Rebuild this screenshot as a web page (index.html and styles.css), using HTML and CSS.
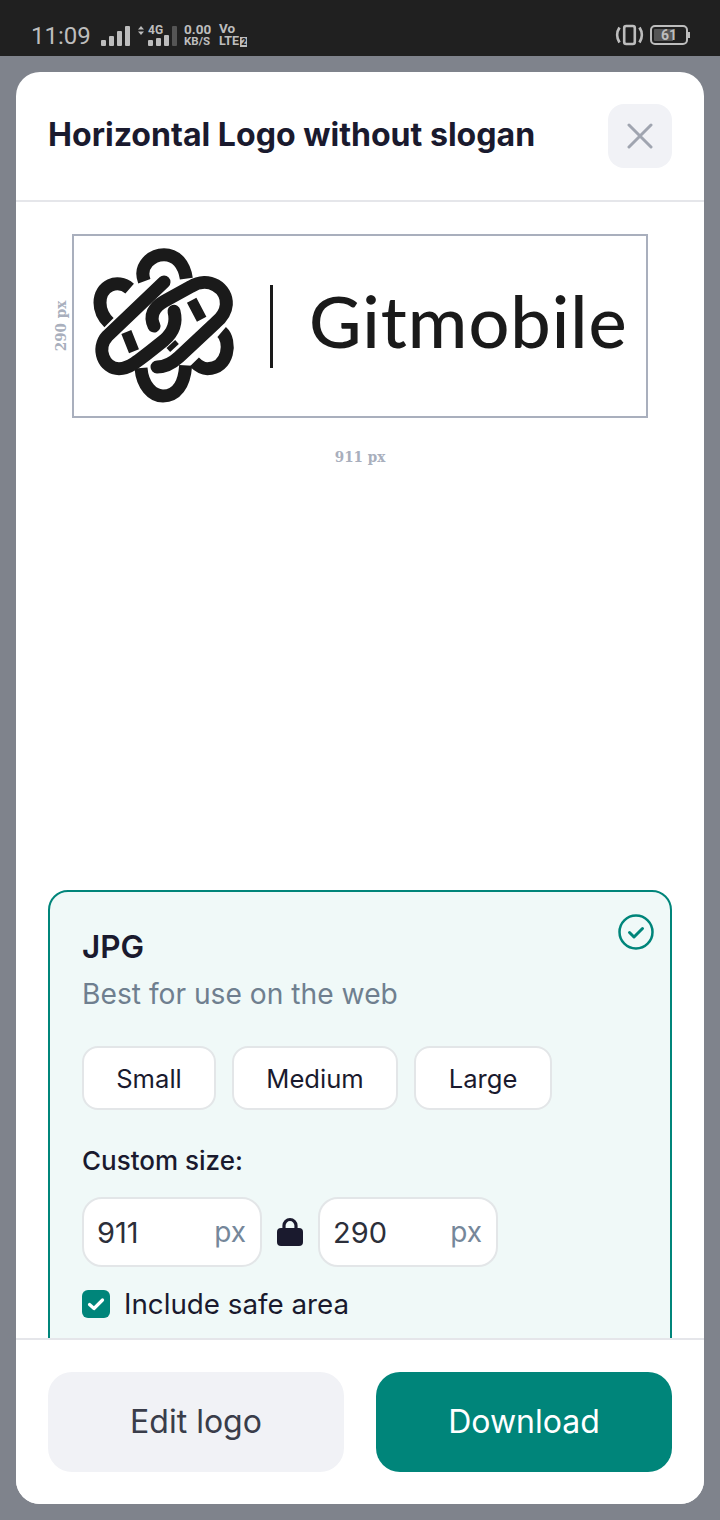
FILE: index.html
```html
<!DOCTYPE html>
<html lang="en">
<head>
  <meta charset="UTF-8" />
  <meta name="viewport" content="width=device-width, initial-scale=1.0"/>
  <title>Horizontal Logo without slogan</title>
  <link rel="stylesheet" href="styles.css">
</head>
<body>
  <div class="status-bar">
    <div class="status-left">
      <span class="time">11:09</span>
      <svg class="signal-a" width="29" height="20" viewBox="0 0 29 20">
        <rect x="0" y="14" width="5" height="6" rx="1"/>
        <rect x="8" y="10" width="5" height="10" rx="1"/>
        <rect x="16" y="5" width="5" height="15" rx="1"/>
        <rect x="24" y="0" width="5" height="20" rx="1"/>
      </svg>
      <svg class="arrows" width="6" height="9" viewBox="0 0 6 9">
        <path d="M3 0l3 3.5H0zM3 9L0 5.5h6z"/>
      </svg>
      <div class="net">
        <span class="net-label">4G</span>
        <svg width="29" height="11" viewBox="0 0 29 11">
          <rect x="0" y="5" width="5" height="6" rx="1"/>
          <rect x="8" y="3" width="5" height="8" rx="1"/>
          <rect x="16" y="0" width="5" height="11" rx="1"/>
        </svg>
        <svg class="signal-off" width="5" height="20" viewBox="0 0 5 20">
          <rect width="5" height="20" rx="1"/>
        </svg>
      </div>
      <div class="speed"><span>0.00</span><span>KB/S</span></div>
      <div class="volte"><span>Vo</span><span>LTE<b>2</b></span></div>
    </div>
    <div class="status-right">
      <svg width="29" height="22" viewBox="0 0 29 22" fill="none" stroke="#bdbdbd">
        <rect x="9.2" y="2" width="10.6" height="18" rx="2" stroke-width="2.6"/>
        <path d="M4.5 3.5C1.5 8 1.5 14 4.5 18.500M24.500 3.500C27.500 8 27.500 14 24.500 18.500" stroke-width="2.800"/>
      </svg>
      <div class="battery">
        <div class="battery-body"><span>61</span></div>
        <div class="battery-tip"></div>
      </div>
    </div>
  </div>

  <div class="backdrop">
    <div class="modal">
      <header class="modal-head">
        <h1>Horizontal Logo without slogan</h1>
        <button class="close-btn">
          <svg width="26" height="26" viewBox="0 0 26 26" fill="none" stroke="#a0a5b0" stroke-width="3" stroke-linecap="round">
            <path d="M2 2l22 22M24 2L2 24"/>
          </svg>
        </button>
      </header>

      <div class="modal-body">
        <div class="preview">
          <div class="logo-frame">
            <span class="dim dim-h">290 px</span>
            <svg class="logo-mark" width="150" height="160" viewBox="153 62 450 480" fill="none" stroke="#1a1a1a" stroke-width="39">
              <path d="M316 168C298 120 340 88 375 88C412 88 436 118 442 160"/>
              <path d="M272 190C235 158 183 182 183 232C183 256 194 276 210 292"/>
              <path d="M306 428C310 480 340 512 372 512C410 512 436 480 440 420"/>
              <path d="M548 320C578 346 570 430 505 430C490 430 478 422 466 410"/>
              <path stroke-linecap="round" d="M375 170L205 332C170 370 195 430 240 430C272 430 300 405 375 345C410 315 412 285 405 258"/>
              <path stroke-linecap="round" d="M345 302C330 270 345 245 375 228L455 184C510 150 565 190 562 238C560 262 545 280 530 292L420 395C395 418 375 425 354 425"/>
              <path stroke-width="32" d="M262 320L285 378M458 225L488 282"/>
              <path stroke-width="16" d="M388 374L414 350"/>
            </svg>
            <div class="logo-divider"></div>
            <span class="logo-name">Gitmobile</span>
          </div>
          <span class="dim dim-w">911 px</span>
        </div>

        <div class="format-card">
          <svg class="card-check" width="36" height="36" viewBox="0 0 36 36" fill="none" stroke="#00857a">
            <circle cx="18" cy="18" r="16.500" stroke-width="2.500"/>
            <path d="M11.500 18.500l4.500 4.500 8.500-8.500" stroke-width="3" stroke-linecap="round" stroke-linejoin="round"/>
          </svg>
          <h2>JPG</h2>
          <p class="format-desc">Best for use on the web</p>
          <div class="sizes">
            <button class="size-btn">Small</button>
            <button class="size-btn">Medium</button>
            <button class="size-btn">Large</button>
          </div>
          <div class="custom-label">Custom size:</div>
          <div class="custom-row">
            <div class="px-input"><span>911</span><span class="unit">px</span></div>
            <svg width="26" height="30" viewBox="0 0 26 30">
              <path d="M7 14V8.500a6 6 0 0 1 12 0V14" fill="none" stroke="#1a1a2e" stroke-width="3.200"/>
              <rect x="0" y="11" width="26" height="18" rx="4" fill="#1a1a2e"/>
            </svg>
            <div class="px-input"><span>290</span><span class="unit">px</span></div>
          </div>
          <label class="safe-area">
            <span class="checkbox">
              <svg width="18" height="14" viewBox="0 0 18 14" fill="none" stroke="#fff" stroke-width="3.200" stroke-linecap="round" stroke-linejoin="round">
                <path d="M2.500 7.500l4.500 4L15.500 3"/>
              </svg>
            </span>
            Include safe area
          </label>
        </div>
      </div>

      <footer class="modal-foot">
        <button class="foot-btn edit-btn">Edit logo</button>
        <button class="foot-btn download-btn">Download</button>
      </footer>
    </div>
  </div>
</body>
</html>
```

FILE: styles.css
```css
* {
  box-sizing: border-box;
}

body {
  margin: 0;
  width: 720px;
  height: 1520px;
  overflow: hidden;
  font-family: Inter, sans-serif;
  background: #7f838c;
  display: flex;
  flex-direction: column;
}

button {
  font-family: inherit;
  cursor: pointer;
}

/* status bar */
.status-bar {
  height: 56px;
  flex-shrink: 0;
  background: #202020;
  color: #bdbdbd;
  font-family: Roboto, sans-serif;
  display: flex;
  justify-content: space-between;
  align-items: flex-end;
  padding: 0 30px 10px 31px;
}

.status-left {
  display: flex;
  align-items: flex-end;
}

.status-left svg {
  fill: #bdbdbd;
  display: block;
}

.time {
  font-size: 24px;
  line-height: 24px;
  width: 70px;
  margin-bottom: -2px;
}

.arrows {
  margin: 0 4px 11px 8px;
}

.net {
  display: flex;
  align-items: flex-end;
  gap: 3px;
  position: relative;
  width: 29px;
}

.net-label {
  position: absolute;
  left: 0;
  bottom: 10px;
  font-size: 12px;
  line-height: 11px;
  font-weight: 700;
}

.status-left .signal-off {
  fill: #555;
  position: absolute;
  right: 0;
  bottom: 0;
}

.speed,
.volte {
  display: flex;
  flex-direction: column;
  font-weight: 700;
  font-size: 11.5px;
  line-height: 11px;
  margin-bottom: -1px;
}

.speed {
  margin-left: 7px;
  width: 35px;
}

.speed span:first-child,
.volte span:first-child {
  font-size: 13.5px;
  line-height: 13px;
}

.volte {
  font-size: 12.5px;
}

.volte b {
  display: inline-block;
  background: #bdbdbd;
  color: #202020;
  font-size: 9px;
  line-height: 10px;
  padding: 0 1px;
  margin-left: 1px;
}

.status-right {
  display: flex;
  align-items: center;
  gap: 6px;
}

.battery {
  display: flex;
  align-items: center;
}

.battery-body {
  width: 38px;
  height: 20px;
  border: 2px solid #bdbdbd;
  border-radius: 5px;
  padding: 2px;
  background: linear-gradient(to right, #555 62%, transparent 62%);
  background-clip: content-box;
  text-align: center;
}

.battery-body span {
  display: block;
  font-size: 14px;
  line-height: 12px;
  font-weight: 700;
}

.battery-tip {
  width: 2px;
  height: 6px;
  background: #bdbdbd;
}

/* modal */
.backdrop {
  flex: 1;
  padding: 16px 16px;
  min-height: 0;
}

.modal {
  height: 100%;
  background: #fff;
  border-radius: 24px;
  display: flex;
  flex-direction: column;
  overflow: hidden;
}

.modal-head {
  height: 130px;
  flex-shrink: 0;
  padding: 32px;
  display: flex;
  justify-content: space-between;
  align-items: center;
  border-bottom: 2px solid #e5e6ea;
}

.modal-head h1 {
  margin: 0 0 3px;
  font-size: 32.1px;
  font-weight: 700;
  color: #1a1a2e;
}

.close-btn {
  width: 64px;
  height: 64px;
  border: none;
  border-radius: 16px;
  background: #f1f2f6;
  display: flex;
  align-items: center;
  justify-content: center;
  padding: 0;
}

.modal-body {
  flex: 1;
  min-height: 0;
  overflow: hidden;
  padding: 0 32px;
}

/* logo preview */
.preview {
  height: 688px;
  padding-top: 32px;
  display: flex;
  flex-direction: column;
  align-items: center;
}

.logo-frame {
  position: relative;
  width: 576px;
  height: 184px;
  border: 2px solid #a9afbd;
  display: flex;
  align-items: center;
  padding-left: 16px;
}

.logo-divider {
  width: 3px;
  height: 83px;
  background: #1a1a1a;
  margin-left: 30px;
}

.logo-name {
  font-family: Lato, sans-serif;
  font-size: 72px;
  font-weight: 500;
  color: #1a1a1a;
  margin: 0 0 12px 36px;
  letter-spacing: 1px;
}

.dim {
  font-family: "DejaVu Serif Condensed", "DejaVu Serif", serif;
  font-weight: 700;
  font-size: 15px;
  color: #a9afbd;
}

.dim-h {
  position: absolute;
  left: -22px;
  top: 50%;
  writing-mode: vertical-rl;
  transform: translateY(-50%) rotate(180deg);
}

.dim-w {
  margin-top: 30px;
}

/* format card */
.format-card {
  position: relative;
  border: 2px solid #00857a;
  border-radius: 20px;
  background: #f0f9f8;
  padding: 32px;
  height: 480px;
}

.card-check {
  position: absolute;
  top: 22px;
  right: 16px;
}

.format-card h2 {
  margin: 0;
  font-size: 31.5px;
  line-height: 46px;
  font-weight: 600;
  color: #1a1a2e;
}

.format-desc {
  margin: 2px 0 0;
  font-size: 28.2px;
  line-height: 44px;
  color: #6f7f8f;
}

.sizes {
  display: flex;
  gap: 16px;
  margin-top: 30px;
}

.size-btn {
  height: 64px;
  width: 134px;
  padding: 0;
  border: 2px solid #e3e6e8;
  border-radius: 16px;
  background: #fff;
  font-size: 25.6px;
  color: #1a1a2e;
}

.size-btn:nth-child(2) {
  width: 166px;
}

.size-btn:nth-child(3) {
  width: 138px;
}

.custom-label {
  margin-top: 34px;
  font-size: 26px;
  line-height: 34px;
  font-weight: 500;
  color: #1a1a2e;
}

.custom-row {
  display: flex;
  align-items: center;
  gap: 15px;
  margin-top: 19px;
}

.px-input {
  width: 180px;
  height: 70px;
  border: 2px solid #e3e6e8;
  border-radius: 20px;
  background: #fff;
  padding: 0 14px 0 13px;
  display: flex;
  justify-content: space-between;
  align-items: center;
  font-size: 29px;
  color: #2c2f3a;
}

.unit {
  color: #75879a;
  font-size: 28px;
}

.safe-area {
  display: flex;
  align-items: center;
  gap: 14px;
  margin-top: 20px;
  font-size: 27.75px;
  line-height: 34px;
  color: #1a1a2e;
}

.checkbox {
  width: 28px;
  height: 28px;
  border-radius: 6px;
  background: #00857a;
  display: flex;
  align-items: center;
  justify-content: center;
}

/* footer */
.modal-foot {
  height: 166px;
  flex-shrink: 0;
  padding: 32px;
  display: flex;
  gap: 32px;
  background: #fff;
  border-top: 2px solid #e5e6ea;
}

.foot-btn {
  flex: 1;
  height: 100px;
  border: none;
  border-radius: 24px;
  font-size: 32px;
  padding: 0 0 2px;
}

.edit-btn {
  background: #f1f2f6;
  color: #3a3d4a;
}

.download-btn {
  background: #00857a;
  color: #fff;
}
```
